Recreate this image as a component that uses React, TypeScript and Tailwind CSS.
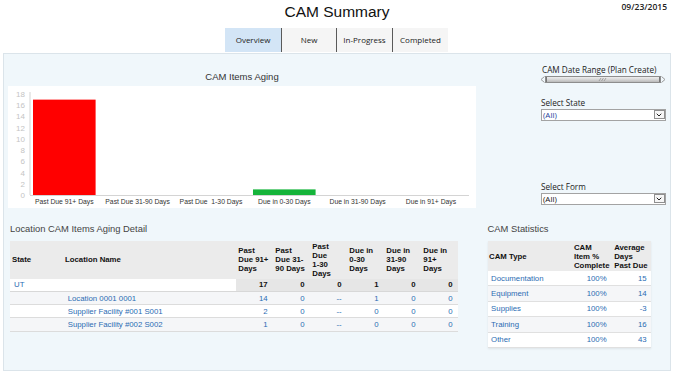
import { ChevronDown } from "lucide-react";

const AGING = [
  { label: "Past Due 91+ Days", value: 17, color: "#ff0000" },
  { label: "Past Due 31-90 Days", value: 0, color: "#ff0000" },
  { label: "Past Due  1-30 Days", value: 0, color: "#ff0000" },
  { label: "Due in 0-30 Days", value: 1, color: "#15b43a" },
  { label: "Due in 31-90 Days", value: 0, color: "#15b43a" },
  { label: "Due in 91+ Days", value: 0, color: "#15b43a" },
];

const DETAIL_HEADS = [
  ["Past", "Due 91+", "Days"],
  ["Past", "Due 31-", "90 Days"],
  ["Past", "Due", "1-30", "Days"],
  ["Due in", "0-30", "Days"],
  ["Due in", "31-90", "Days"],
  ["Due in", "91+", "Days"],
];

const LOCATIONS = [
  { name: "Location 0001 0001", vals: ["14", "0", "--", "1", "0", "0"] },
  { name: "Supplier Facility #001 S001", vals: ["2", "0", "--", "0", "0", "0"] },
  { name: "Supplier Facility #002 S002", vals: ["1", "0", "--", "0", "0", "0"] },
];

const STATS = [
  { type: "Documentation", pct: "100%", days: "15" },
  { type: "Equipment", pct: "100%", days: "14" },
  { type: "Supplies", pct: "100%", days: "-3" },
  { type: "Training", pct: "100%", days: "16" },
  { type: "Other", pct: "100%", days: "43" },
];

const TABS = [
  { label: "Overview", w: "w-[56px]", active: true },
  { label: "New", w: "w-[54px]", active: false },
  { label: "In-Progress", w: "w-[55px]", active: false },
  { label: "Completed", w: "w-[55px]", active: false },
];

function AgingChart() {
  const base = 109;
  const unit = 5.61;
  return (
    <svg width="468" height="122" className="block">
      {[0, 2, 4, 6, 8, 10, 12, 14, 16, 18].map((v) => (
        <text key={v} x="17" y={base - v * unit + 3} textAnchor="end" fontSize="8" fill="#c4c4c4" fontFamily="Liberation Sans, Arial, sans-serif">
          {v}
        </text>
      ))}
      <line x1="22" y1="6" x2="22" y2={base} stroke="#d4d4d4" strokeWidth="1" />
      {AGING.map((a, i) => {
        const cx = 56.3 + 73.33 * i;
        const h = a.value * unit;
        return (
          <g key={a.label}>
            {a.value > 0 && <rect x={cx - 31.3} y={base - h} width="62.6" height={h} fill={a.color} />}
            <text x={cx} y="118.2" textAnchor="middle" fontSize="6.8" fill="#333" fontFamily="Liberation Sans, Arial, sans-serif" style={{ whiteSpace: "pre" }}>
              {a.label}
            </text>
          </g>
        );
      })}
      <line x1="22" y1={base + 0.5} x2="461" y2={base + 0.5} stroke="#d4d4d4" strokeWidth="1" />
    </svg>
  );
}

function DateSlider() {
  return (
    <svg width="126" height="7" className="block">
      <defs>
        <linearGradient id="trk" x1="0" y1="0" x2="0" y2="1">
          <stop offset="0" stopColor="#f2f2f2" />
          <stop offset="0.5" stopColor="#d6d6d6" />
          <stop offset="1" stopColor="#b4b4b4" />
        </linearGradient>
      </defs>
      <path d="M4.5 0.5 L1 3.5 L4.5 6.5" fill="none" stroke="#9a9a9a" strokeWidth="1" />
      <path d="M121.5 0.5 L125 3.5 L121.5 6.5" fill="none" stroke="#9a9a9a" strokeWidth="1" />
      <rect x="5.5" y="0.5" width="115" height="6" fill="url(#trk)" stroke="#8d8d8d" strokeWidth="1" />
      <line x1="6.5" y1="1" x2="6.5" y2="6" stroke="#777" />
      <line x1="119.5" y1="1" x2="119.5" y2="6" stroke="#777" />
      <path d="M59 5 L61 2 M61.5 5 L63.5 2 M64 5 L66 2" stroke="#8a8a8a" strokeWidth="0.7" />
    </svg>
  );
}

function SelectBox({ value, blue }: { value: string; blue?: boolean }) {
  return (
    <div className="flex h-[12px] w-[125px] items-stretch border border-[#a3a3a3] bg-white">
      <span className={`flex-1 pl-[1px] text-[8px] leading-[10px] ${blue ? "text-[#1e3f99]" : "text-[#111]"}`}>{value}</span>
      <span className="m-[0.5px] flex w-[11px] items-center justify-center border border-[#8f8f8f] bg-[#f6f6f6]">
        <ChevronDown size={8} strokeWidth={3} className="text-[#222]" />
      </span>
    </div>
  );
}

export default function App() {
  return (
    <div className="relative h-[372px] w-[674px] overflow-hidden bg-white font-['Liberation_Sans',Arial,sans-serif] text-[#222]">
      {/* Title row */}
      <div className="grid h-[28px] grid-cols-[1fr_auto_1fr]">
        <div />
        <h1 className="pt-[4px] text-[15.5px] leading-none text-[#111]">CAM Summary</h1>
        <div className="justify-self-end pr-[7px] pt-[3px] font-['Open_Sans',sans-serif] text-[8.5px] font-semibold leading-none text-[#222]">
          09/23/2015
        </div>
      </div>

      {/* Tabs */}
      <div className="flex h-[24px] pl-[225px] font-['Open_Sans',sans-serif] text-[8px] text-[#222]">
        {TABS.map((t, i) => (
          <div key={t.label} className="flex">
            {i > 0 && <div className="w-[1px] bg-[#5a5a5a]" />}
            <div className={`flex ${t.w} items-center justify-center ${t.active ? "bg-[#d3e5f6]" : "bg-[#f5f5f5]"}`}>{t.label}</div>
          </div>
        ))}
      </div>

      {/* Main panel */}
      <div className="mx-[3px] mt-[1px] flex h-[318px] flex-col border border-[#dbe4ea] bg-[#f0f7fb]">
        <div className="flex">
          <div className="ml-[4px] flex w-[468px] flex-col pt-[18px]">
            <div className="text-center text-[9.5px] leading-none text-[#333]">CAM Items Aging</div>
            <div className="mt-[4.5px] h-[122px] bg-white">
              <AgingChart />
            </div>
          </div>

          <div className="ml-[64px] flex w-[126px] flex-col pt-[12.3px] font-['Open_Sans',sans-serif] text-[8.2px] leading-none text-[#222]">
            <div className="pl-[2px]">CAM Date Range (Plan Create)</div>
            <div className="mt-[1.9px]">
              <DateSlider />
            </div>
            <div className="mt-[15.9px] pl-[1px]">Select State</div>
            <div className="mt-[1.4px] pl-[1px]">
              <SelectBox value="(All)" blue />
            </div>
            <div className="mt-[62.6px] pl-[1px]">Select Form</div>
            <div className="mt-[1.2px] pl-[1px]">
              <SelectBox value="(All)" />
            </div>
          </div>
        </div>

        <div className="mt-[15.8px] flex">
          {/* Location detail */}
          <div className="ml-[6px] flex w-[448px] flex-col">
            <div className="text-[9.4px] leading-none text-[#444]">Location CAM Items Aging Detail</div>
            <div className="mt-[7.8px] text-[7.8px] leading-[9px]">
              <div className="flex h-[37.6px] items-center bg-[#ebebeb] font-bold text-[#111]">
                <div className="w-[53px] pl-[2px]">State</div>
                <div className="w-[173px] pl-[2px]">Location Name</div>
                {DETAIL_HEADS.map((lines, i) => (
                  <div key={i} className="w-[37px] pl-[2.3px]">
                    {lines.map((l, j) => (
                      <div key={j}>{l}</div>
                    ))}
                  </div>
                ))}
              </div>
              <div className="flex h-[13.3px] items-center border-b border-[#d8d8d8]">
                <div className="flex h-full w-[226px] items-center bg-white pl-[4px] text-[#2b6cb3]">UT</div>
                <div className="flex h-full flex-1 items-center bg-[#e6e6e6] font-bold text-[#111]">
                  {["17", "0", "0", "1", "0", "0"].map((v, i) => (
                    <div key={i} className="w-[37px] pr-[5.3px] text-right">
                      {v}
                    </div>
                  ))}
                </div>
              </div>
              {LOCATIONS.map((loc, r) => (
                <div key={loc.name} className={`flex h-[13.3px] items-center border-b border-[#dcdcdc] text-[#2b6cb3] ${r % 2 === 0 ? "bg-[#f5f6f8]" : "bg-white"}`}>
                  <div className="w-[53px]" />
                  <div className="w-[173px] pl-[4.7px]">{loc.name}</div>
                  {loc.vals.map((v, i) => (
                    <div key={i} className="w-[37px] pr-[5.3px] text-right">
                      {v}
                    </div>
                  ))}
                </div>
              ))}
            </div>
          </div>

          {/* Statistics */}
          <div className="ml-[29.6px] flex w-[163px] flex-col">
            <div className="text-[9.4px] leading-none text-[#444]">CAM Statistics</div>
            <div className="mt-[7.8px] text-[7.8px] leading-[9px] shadow-[0_1px_2px_rgba(0,0,0,0.08)]">
              <div className="flex h-[30px] items-center bg-[#ebebeb] font-bold text-[#111]">
                <div className="w-[84px] pl-[1.5px]">CAM Type</div>
                <div className="w-[39px] pl-[2.4px]">
                  <div>CAM</div>
                  <div>Item %</div>
                  <div>Complete</div>
                </div>
                <div className="w-[40px] pl-[3.6px]">
                  <div>Average</div>
                  <div>Days</div>
                  <div>Past Due</div>
                </div>
              </div>
              {STATS.map((s, r) => (
                <div key={s.type} className={`flex h-[15.4px] items-center border-b border-[#e0e0e0] text-[#2b6cb3] ${r % 2 === 1 ? "bg-[#f5f6f8]" : "bg-white"}`}>
                  <div className="w-[84px] pl-[3.5px]">{s.type}</div>
                  <div className="w-[39px] pr-[4px] text-right">{s.pct}</div>
                  <div className="w-[40px] pr-[4px] text-right">{s.days}</div>
                </div>
              ))}
            </div>
          </div>
        </div>
      </div>
    </div>
  );
}
